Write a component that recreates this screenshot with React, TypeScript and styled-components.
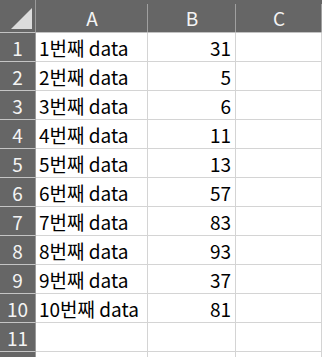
import React from "react";
import styled, { createGlobalStyle } from "styled-components";

const GlobalStyle = createGlobalStyle`
  html, body {
    margin: 0;
    padding: 0;
    background: #ffffff;
  }
  body {
    font-family: "Noto Sans CJK KR", "Noto Sans", sans-serif;
  }
`;

const Sheet = styled.div`
  display: grid;
  grid-template-columns: 36px 112px 88px 1fr;
  grid-template-rows: 33px;
  grid-auto-rows: 29px;
  width: 322px;
  height: 357px;
  overflow: hidden;
  font-size: 19px;
`;

const Corner = styled.div`
  box-sizing: border-box;
  background: #666666;
  border-right: 1px solid #9a9a9a;
  border-bottom: 1px solid #c2c2c2;
  display: flex;
  align-items: flex-end;
  justify-content: flex-end;
  padding: 0 2px 3px 0;
`;

const ColHead = styled.div`
  box-sizing: border-box;
  background:
    linear-gradient(#a0a0a0, #a0a0a0) right bottom / 1px calc(100% - 4px) no-repeat,
    #666666;
  border-bottom: 1px solid #c2c2c2;
  color: #f4f4f4;
  display: flex;
  align-items: center;
  justify-content: center;
  line-height: 1;
  padding-top: 2px;
`;

const RowHead = styled.div`
  box-sizing: border-box;
  background: #666666;
  border-right: 1px solid #9a9a9a;
  border-bottom: 1px solid #c4c4c4;
  color: #f4f4f4;
  display: flex;
  align-items: center;
  justify-content: center;
  line-height: 1;
  padding-top: 1px;
`;

const Cell = styled.div<{ $num?: boolean }>`
  box-sizing: border-box;
  border-right: 1px solid #d4d4d4;
  border-bottom: 1px solid #d4d4d4;
  color: #000000;
  display: flex;
  align-items: center;
  justify-content: ${(p) => (p.$num ? "flex-end" : "flex-start")};
  padding: 1px 4px 0 3px;
  white-space: nowrap;
  line-height: 1;
`;

const values = [31, 5, 6, 11, 13, 57, 83, 93, 37, 81];

// 11 visible rows, plus the top sliver of row 12 at the bottom edge
const rows = Array.from({ length: 12 }, (_, i) => ({
  n: i < 11 ? String(i + 1) : "",
  label: i < values.length ? `${i + 1}번째 data` : "",
  value: i < values.length ? values[i] : null,
}));

const App = () => {
  return (
    <>
      <GlobalStyle />
      <Sheet>
        <Corner>
          <svg width="22" height="22" viewBox="0 0 22 22">
            <polygon points="0,22 21,22 21,1" fill="#dcdcdc" />
          </svg>
        </Corner>
        <ColHead>A</ColHead>
        <ColHead>B</ColHead>
        <ColHead>C</ColHead>
        {rows.map((r, i) => (
          <React.Fragment key={i}>
            <RowHead>{r.n}</RowHead>
            <Cell>{r.label}</Cell>
            <Cell $num>{r.value ?? ""}</Cell>
            <Cell />
          </React.Fragment>
        ))}
      </Sheet>
    </>
  );
};

export default App;
